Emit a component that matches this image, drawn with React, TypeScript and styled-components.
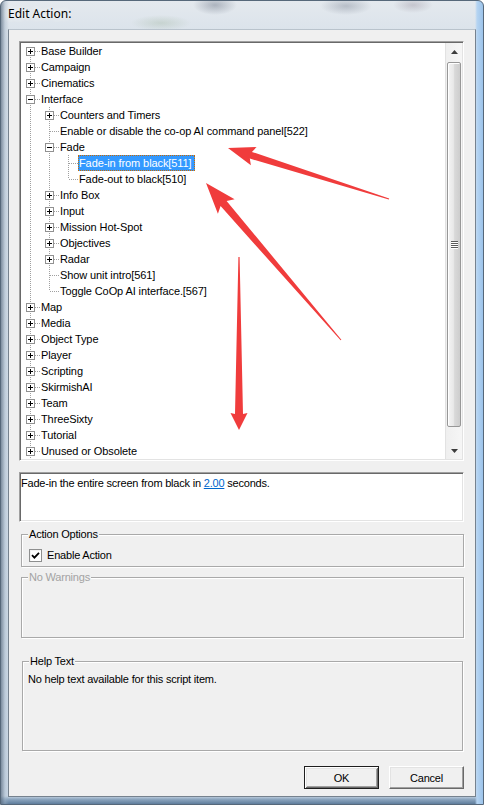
import React from "react";
import styled, { createGlobalStyle, css } from "styled-components";

const FONT = `"Liberation Sans", Arial, sans-serif`;

const GlobalStyle = createGlobalStyle`
  html, body { margin: 0; padding: 0; background: #ffffff; }
  body { width: 484px; height: 805px; overflow: hidden; font-family: ${FONT}; }
`;

/* ---------- window frame ---------- */

const Window = styled.div`
  position: relative;
  box-sizing: border-box;
  width: 484px;
  height: 805px;
  padding: 0 7px 7px 7px;
  border: 1px solid #56687a;
  border-radius: 6px 6px 0 0;
  display: flex;
  flex-direction: column;
  background:
    radial-gradient(ellipse 22px 10px at 214px 4px, rgba(70, 80, 100, 0.35), transparent),
    radial-gradient(ellipse 26px 9px at 345px 5px, rgba(70, 80, 100, 0.28), transparent),
    radial-gradient(ellipse 20px 8px at 412px 4px, rgba(90, 70, 90, 0.22), transparent),
    radial-gradient(ellipse 30px 8px at 160px 22px, rgba(120, 150, 110, 0.22), transparent),
    linear-gradient(to right, rgba(96, 114, 134, 0.75) 0px, rgba(160, 178, 196, 0.4) 4px, transparent 8px),
    linear-gradient(to left, #9cc3ea 0px, #b5d4f2 6px, transparent 8px),
    linear-gradient(to top, #5f7d9c 0px, #90a9c2 5px, transparent 8px),
    linear-gradient(to bottom, #e4e9ee 0px, #d8e1ea 40px, #ccd9e6 100%);
`;

const TitleBar = styled.div`
  height: 28px;
  flex: 0 0 28px;
  display: flex;
  align-items: flex-start;
  padding-top: 5px;
  box-sizing: border-box;
`;

const Title = styled.span`
  font-family: "Noto Sans", "Open Sans", sans-serif;
  font-size: 12px;
  line-height: 16px;
  color: #000;
  text-shadow: 0 0 6px rgba(255, 255, 255, 0.95), 0 0 10px rgba(255, 255, 255, 0.8);
`;

const Client = styled.div`
  flex: 1;
  box-sizing: border-box;
  background: #f0f0f0;
  border: 1px solid #76828e;
  border-top-color: #b9c3cc;
  padding: 11px 11px 0 10px;
  display: flex;
  flex-direction: column;
  font-family: ${FONT};
  font-size: 11px;
  letter-spacing: -0.2px;
  color: #000;
`;

/* ---------- sunken boxes ---------- */

const sunken = css`
  box-sizing: border-box;
  background: #ffffff;
  border: 1px solid;
  border-color: #a0a0a0 #ffffff #ffffff #a0a0a0;
  box-shadow: inset 1px 1px 0 #696969, inset -1px -1px 0 #e3e3e3;
  padding: 1px;
`;

const TreeBox = styled.div`
  ${sunken};
  height: 420px;
  display: flex;
  flex: 0 0 420px;
`;

const TreeContent = styled.div`
  flex: 1;
  overflow: hidden;
  display: flex;
  flex-direction: column;
  letter-spacing: -0.1px;
`;

/* ---------- tree rows ---------- */

const Row = styled.div`
  display: flex;
  align-items: stretch;
  height: 16px;
  flex: 0 0 16px;
`;

const Cell = styled.span<{ $top: boolean; $bottom: boolean; $horiz: boolean }>`
  position: relative;
  flex: 0 0 19px;
  height: 16px;
  &::before {
    content: "";
    position: absolute;
    left: 9px;
    width: 1px;
    top: ${(p) => (p.$top ? 0 : 8)}px;
    bottom: ${(p) => (p.$bottom ? 0 : 8)}px;
    background-image: linear-gradient(to bottom, #a0a0a0 50%, transparent 50%);
    background-size: 1px 2px;
  }
  &::after {
    content: "";
    display: ${(p) => (p.$horiz ? "block" : "none")};
    position: absolute;
    left: 9px;
    right: 0;
    top: 8px;
    height: 1px;
    background-image: linear-gradient(to right, #a0a0a0 50%, transparent 50%);
    background-size: 2px 1px;
    background-position: 1px 0;
  }
`;

const ExpandBox = styled.span`
  position: absolute;
  z-index: 1;
  left: 5px;
  top: 4px;
  width: 9px;
  height: 9px;
  box-sizing: border-box;
  border: 1px solid #919191;
  background: #ffffff;
`;

const GlyphH = styled.span`
  position: absolute;
  left: 1px;
  top: 3px;
  width: 5px;
  height: 1px;
  background: #000;
`;

const GlyphV = styled.span`
  position: absolute;
  left: 3px;
  top: 1px;
  width: 1px;
  height: 5px;
  background: #000;
`;

const NodeLabel = styled.span<{ $selected?: boolean }>`
  height: 16px;
  line-height: 16px;
  padding: 0 4px 0 1px;
  white-space: nowrap;
  box-sizing: border-box;
  ${(p) =>
    p.$selected &&
    css`
      background: #3399ff;
      color: #ffffff;
      outline: 1px dotted #cc6a00;
      outline-offset: -1px;
    `}
`;

/* ---------- scrollbar ---------- */

const ScrollBar = styled.div`
  flex: 0 0 17px;
  width: 17px;
  display: flex;
  flex-direction: column;
  background: linear-gradient(to right, #e2e2e2 0px, #e2e2e2 1px, #efefef 1px, #f6f6f6 100%);
`;

const ScrollButton = styled.div`
  flex: 0 0 17px;
  height: 17px;
  display: flex;
  align-items: center;
  justify-content: center;
  padding-left: 1px;
`;

const Track = styled.div`
  flex: 1;
  display: flex;
  flex-direction: column;
`;

const Thumb = styled.div`
  box-sizing: border-box;
  margin: 2px 1px 0 2px;
  height: 365px;
  border: 1px solid #979797;
  border-radius: 2px;
  background: linear-gradient(to right, #f4f4f4 0%, #e8e8e8 45%, #d9d9d9 55%, #cdcdcd 100%);
  box-shadow: inset 1px 1px 0 #ffffff;
  display: flex;
  align-items: center;
  justify-content: center;
`;

const Grip = styled.span`
  width: 7px;
  height: 8px;
  background: repeating-linear-gradient(to bottom, #5a5a5a 0px, #5a5a5a 1px, #ffffff 1px, #ffffff 2px);
`;

/* ---------- description ---------- */

const Description = styled.div`
  ${sunken};
  margin-top: 11px;
  height: 50px;
  flex: 0 0 50px;
  padding: 4px 2px 2px 1px;
  line-height: 12px;
`;

const Link = styled.span`
  color: #0066cc;
  text-decoration: underline;
`;

/* ---------- group boxes ---------- */

const GroupBox = styled.div<{ $mt: number; $ml: number; $w: number; $h: number }>`
  position: relative;
  box-sizing: border-box;
  margin-top: ${(p) => p.$mt}px;
  margin-left: ${(p) => p.$ml}px;
  width: ${(p) => p.$w}px;
  height: ${(p) => p.$h}px;
  flex: 0 0 ${(p) => p.$h}px;
  border: 1px solid #a9a9a9;
  box-shadow: inset 1px 1px 0 #ffffff, 1px 1px 0 #ffffff;
`;

const GroupLabel = styled.span<{ $disabled?: boolean }>`
  position: absolute;
  left: 6px;
  top: -7px;
  padding: 0 1px;
  line-height: 13px;
  background: #f0f0f0;
  color: ${(p) => (p.$disabled ? "#a3a3a3" : "#000")};
`;

const CheckRow = styled.label`
  display: flex;
  align-items: center;
  padding: 14px 0 0 7px;
  line-height: 13px;
`;

const CheckBox = styled.span`
  box-sizing: border-box;
  width: 13px;
  height: 13px;
  border: 1px solid #8e8f8f;
  background: #ffffff;
  box-shadow: inset 1px 1px 0 #f4f4f4;
  display: flex;
  align-items: center;
  justify-content: center;
  margin-right: 5px;
`;

const HelpBody = styled.div`
  padding: 11px 0 0 5px;
  line-height: 12px;
`;

/* ---------- buttons ---------- */

const ButtonRow = styled.div`
  margin-top: 15px;
  display: flex;
  justify-content: flex-end;
  gap: 10px;
`;

const Button = styled.button<{ $default?: boolean }>`
  box-sizing: border-box;
  width: 75px;
  height: 23px;
  padding: 0;
  font-family: ${FONT};
  font-size: 11px;
  letter-spacing: -0.2px;
  color: #000;
  background: #f0f0f0;
  border: 1px solid;
  border-color: #ffffff #696969 #696969 #ffffff;
  box-shadow: inset -1px -1px 0 #a0a0a0, inset 1px 1px 0 #e3e3e3;
  ${(p) =>
    p.$default &&
    css`
      border-color: #1e1e1e;
      box-shadow: inset 1px 1px 0 #ffffff, inset -1px -1px 0 #696969, inset 2px 2px 0 #e3e3e3,
        inset -2px -2px 0 #a0a0a0;
    `}
`;

/* ---------- overlay ---------- */

const Overlay = styled.svg`
  position: absolute;
  left: 0;
  top: 0;
  width: 484px;
  height: 805px;
  pointer-events: none;
  z-index: 5;
`;

/* ---------- data ---------- */

type TNode = { label: string; folder?: boolean; expanded?: boolean; selected?: boolean; children?: TNode[] };

const folder = (label: string): TNode => ({ label, folder: true });
const leaf = (label: string, selected = false): TNode => ({ label, selected });

const TREE: TNode[] = [
  folder("Base Builder"),
  folder("Campaign"),
  folder("Cinematics"),
  {
    label: "Interface",
    folder: true,
    expanded: true,
    children: [
      folder("Counters and Timers"),
      leaf("Enable or disable the co-op AI command panel[522]"),
      {
        label: "Fade",
        folder: true,
        expanded: true,
        children: [leaf("Fade-in from black[511]", true), leaf("Fade-out to black[510]")],
      },
      folder("Info Box"),
      folder("Input"),
      folder("Mission Hot-Spot"),
      folder("Objectives"),
      folder("Radar"),
      leaf("Show unit intro[561]"),
      leaf("Toggle CoOp AI interface.[567]"),
    ],
  },
  folder("Map"),
  folder("Media"),
  folder("Object Type"),
  folder("Player"),
  folder("Scripting"),
  folder("SkirmishAI"),
  folder("Team"),
  folder("ThreeSixty"),
  folder("Tutorial"),
  folder("Unused or Obsolete"),
];

type FlatRow = { node: TNode; guides: boolean[]; hasNext: boolean; first: boolean };

function flatten(nodes: TNode[], guides: boolean[], out: FlatRow[], moreBelow: boolean) {
  nodes.forEach((n, i) => {
    const hasNext = i < nodes.length - 1 || moreBelow;
    out.push({ node: n, guides, hasNext, first: guides.length === 0 && i === 0 });
    if (n.expanded && n.children) flatten(n.children, [...guides, hasNext], out, false);
  });
  return out;
}

const ROWS = flatten(TREE, [], [], true);

function arrowPoints(
  tx: number,
  ty: number,
  px: number,
  py: number,
  headLen: number,
  headHalf: number,
  w0: number,
  w1: number,
  notch: number
) {
  const dx = px - tx;
  const dy = py - ty;
  const L = Math.hypot(dx, dy);
  const ux = dx / L;
  const uy = dy / L;
  const nx = -uy;
  const ny = ux;
  const bx = px - ux * headLen;
  const by = py - uy * headLen;
  const pts = [
    [tx + nx * w0, ty + ny * w0],
    [bx + nx * w1, by + ny * w1],
    [bx - ux * notch + nx * headHalf, by - uy * notch + ny * headHalf],
    [px, py],
    [bx - ux * notch - nx * headHalf, by - uy * notch - ny * headHalf],
    [bx - nx * w1, by - ny * w1],
    [tx - nx * w0, ty - ny * w0],
  ];
  return pts.map((p) => p.map((v) => v.toFixed(1)).join(",")).join(" ");
}

const ARROWS = [
  arrowPoints(388, 198, 227, 147, 24, 9.5, 0.5, 3.5, 3),
  arrowPoints(340, 339, 205, 182, 27, 11, 0.5, 4, 4),
  arrowPoints(238, 256, 238, 429, 16, 8.5, 0.6, 4, 1),
];

/* ---------- components ---------- */

function TreeRow({ row }: { row: FlatRow }) {
  const { node, guides, hasNext, first } = row;
  return (
    <Row>
      {guides.map((g, i) => (
        <Cell key={i} $top={g} $bottom={g} $horiz={false} />
      ))}
      <Cell $top={!first} $bottom={hasNext} $horiz>
        {node.folder && (
          <ExpandBox>
            <GlyphH />
            {!node.expanded && <GlyphV />}
          </ExpandBox>
        )}
      </Cell>
      <NodeLabel $selected={node.selected}>{node.label}</NodeLabel>
    </Row>
  );
}

export default function App() {
  return (
    <>
      <GlobalStyle />
      <Window>
        <TitleBar>
          <Title>Edit Action:</Title>
        </TitleBar>
        <Client>
          <TreeBox>
            <TreeContent>
              {ROWS.map((r, i) => (
                <TreeRow key={i} row={r} />
              ))}
            </TreeContent>
            <ScrollBar>
              <ScrollButton>
                <svg width="7" height="4" viewBox="0 0 7 4">
                  <polygon points="3.5,0 7,4 0,4" fill="#3c3c3c" />
                </svg>
              </ScrollButton>
              <Track>
                <Thumb>
                  <Grip />
                </Thumb>
              </Track>
              <ScrollButton>
                <svg width="7" height="4" viewBox="0 0 7 4">
                  <polygon points="0,0 7,0 3.5,4" fill="#3c3c3c" />
                </svg>
              </ScrollButton>
            </ScrollBar>
          </TreeBox>

          <Description>
            Fade-in the entire screen from black in <Link>2.00</Link> seconds.
          </Description>

          <GroupBox $mt={12} $ml={2} $w={443} $h={33}>
            <GroupLabel>Action Options</GroupLabel>
            <CheckRow>
              <CheckBox>
                <svg width="9" height="9" viewBox="0 0 9 9">
                  <path d="M1 4.2 L3.4 6.6 L8 1.8" stroke="#000" strokeWidth="1.8" fill="none" />
                </svg>
              </CheckBox>
              Enable Action
            </CheckRow>
          </GroupBox>

          <GroupBox $mt={10} $ml={2} $w={443} $h={61}>
            <GroupLabel $disabled>No Warnings</GroupLabel>
          </GroupBox>

          <GroupBox $mt={23} $ml={3} $w={441} $h={90}>
            <GroupLabel>Help Text</GroupLabel>
            <HelpBody>No help text available for this script item.</HelpBody>
          </GroupBox>

          <ButtonRow>
            <Button $default>OK</Button>
            <Button>Cancel</Button>
          </ButtonRow>
        </Client>
        <Overlay viewBox="0 0 484 805">
          {ARROWS.map((p, i) => (
            <polygon key={i} points={p} fill="#f03c3c" />
          ))}
        </Overlay>
      </Window>
    </>
  );
}
